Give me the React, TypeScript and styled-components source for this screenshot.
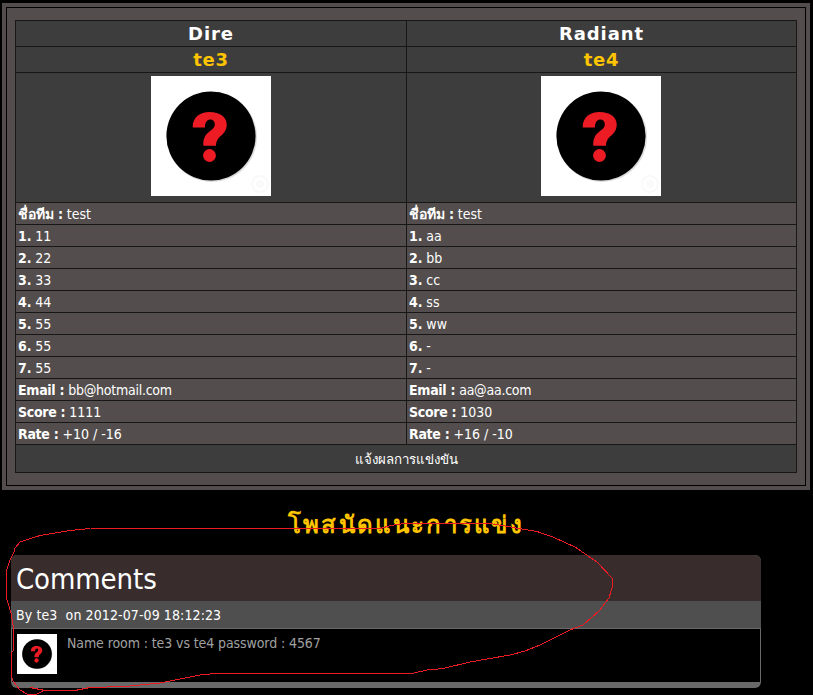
import React from 'react';
import styled, { createGlobalStyle } from 'styled-components';

const Global = createGlobalStyle`
  body { margin: 0; background: #000; color: #fff; font-family: 'DejaVu Sans Condensed', 'Noto Sans', 'DejaVu Sans', sans-serif; }
  #root { width: 813px; height: 695px; overflow: hidden; }
`;

const Page = styled.main`
  position: relative;
  width: 813px;
  height: 695px;
  box-sizing: border-box;
  padding: 3px 3px 0 2px;
  overflow: hidden;
`;

const Panel = styled.section`
  box-sizing: border-box;
  height: 487px;
  padding: 4px;
  background: #534e4d;
`;

const PanelInner = styled.div`
  box-sizing: border-box;
  height: 479px;
  width: 800px;
  padding: 12px 8px;
  border: 1px solid #000;
`;

const Grid = styled.div`
  display: grid;
  grid-template-columns: 390px 389px;
  grid-template-rows: 25px 25px 129px repeat(11, 21px) 27px;
  gap: 1px;
  width: 780px;
  padding: 1px;
  background: #171717;
`;

const HeadCell = styled.div<{ $accent?: boolean }>`
  display: flex;
  align-items: center;
  justify-content: center;
  background: #3d3d3d;
  color: ${(p) => (p.$accent ? '#ffc400' : '#fff')};
  font: bold 18px/24px 'DejaVu Sans', sans-serif;
  letter-spacing: ${(p) => (p.$accent ? '0.7px' : '0.9px')};
`;

const PictureCell = styled(HeadCell)`
  align-items: flex-start;
  justify-content: flex-start;
  padding: 3px 0 0 135px;

  &:nth-child(even) {
    padding-left: 134px;
  }
`;

const InfoCell = styled.div`
  padding-left: 2px;
  background: #534e4d;
  font-size: 14px;
  line-height: 23px;
  white-space: pre;
  overflow: hidden;
`;

const Label = styled.b<{ $wide?: boolean }>`
  letter-spacing: ${(p) => (p.$wide ? '-0.3px' : '-0.1px')};
`;

const Value = styled.span<{ $tight?: boolean }>`
  letter-spacing: ${(p) => (p.$tight ? '-0.25px' : '0')};
`;

const ReportCell = styled.div`
  grid-column: 1 / -1;
  background: #3d3d3d;
  font-size: 13.3px;
  line-height: 29px;
  text-align: center;
  height: 27px;
`;

const Title = styled.h1`
  margin: 0;
  height: 65px;
  color: #ffc400;
  font: bold 24px/70px 'DejaVu Sans', sans-serif;
  letter-spacing: 2.3px;
  text-align: center;
`;

const Comments = styled.section`
  width: 750px;
  height: 133px;
  margin-left: 9px;
  border-radius: 6px;
  overflow: hidden;
  background: #696969;
`;

const CommentsHeading = styled.h2`
  margin: 0;
  height: 46px;
  padding-left: 5px;
  background: #392c2c;
  font-size: 29px;
  font-weight: normal;
  line-height: 49px;
  letter-spacing: -0.1px;
`;

const Byline = styled.div`
  height: 27px;
  padding-left: 5px;
  background: #4f4f4f;
  font-size: 14px;
  line-height: 28px;
  letter-spacing: 0.1px;
  white-space: pre;
`;

const CommentBody = styled.div`
  display: flex;
  gap: 10px;
  height: 48px;
  margin: 1px 1px 0;
  padding: 5px 0 0 5px;
  background: #000;
  color: #a0a0a0;
  font-size: 14px;
  line-height: 18px;
  letter-spacing: -0.1px;
`;

const Ink = styled.svg`
  position: absolute;
  inset: 0;
  pointer-events: none;
`;

function Avatar({ size }: { size: number }) {
  return (
    <svg width={size} height={size} viewBox="0 0 120 120">
      <rect width="120" height="120" fill="#fff" />
      <circle cx="61" cy="61" r="45" fill="#ddd" />
      <circle cx="60" cy="60" r="44.6" fill="#000" />
      <path d="M41.7 51.5C41.5 41 49 36 58.5 36C69 36 75.7 41 75.7 48.5C75.7 60 65 59 65 69.7H52.3C51.8 54 64 56 63.8 48C63.6 41.5 53.5 41.5 54 51.5Z" fill="#ed1c24" />
      <circle cx="58.5" cy="79.5" r="6.4" fill="#ed1c24" />
      <circle cx="109" cy="108" r="8" fill="none" stroke="#f9f9f9" strokeWidth="2" />
      <circle cx="109" cy="108" r="4" fill="#fafafa" />
    </svg>
  );
}

const rows = [
  ['ชื่อทีม :', 'test', 'test'],
  ['1.', '11', 'aa'],
  ['2.', '22', 'bb'],
  ['3.', '33', 'cc'],
  ['4.', '44', 'ss'],
  ['5.', '55', 'ww'],
  ['6.', '55', '-'],
  ['7.', '55', '-'],
  ['Email :', 'bb@hotmail.com', 'aa@aa.com'],
  ['Score :', '1111', '1030'],
  ['Rate :', '+10 / -16', '+16 / -10'],
];

export default function App() {
  return (
    <Page>
      <Global />
      <Panel>
        <PanelInner>
          <Grid>
            <HeadCell>Dire</HeadCell>
            <HeadCell>Radiant</HeadCell>
            <HeadCell $accent>te3</HeadCell>
            <HeadCell $accent>te4</HeadCell>
            <PictureCell><Avatar size={120} /></PictureCell>
            <PictureCell><Avatar size={120} /></PictureCell>
            {rows.map(([label, ...teams]) =>
              teams.map((value, i) => (
                <InfoCell key={label + i}>
                  <Label $wide={/^[A-Z]/.test(label)}>{label}</Label>{' '}
                  <Value $tight={value.includes('@')}>{value}</Value>
                </InfoCell>
              )),
            )}
            <ReportCell>แจ้งผลการแข่งขัน</ReportCell>
          </Grid>
        </PanelInner>
      </Panel>
      <Title>โพสนัดแนะการแข่ง</Title>
      <Comments>
        <CommentsHeading>Comments</CommentsHeading>
        <Byline>{'By te3  on 2012-07-09 18:12:23'}</Byline>
        <CommentBody>
          <Avatar size={40} />
          <span>Name room : te3 vs te4 password : 4567</span>
        </CommentBody>
      </Comments>
      <Ink width="813" height="695" fill="none" stroke="#ed1c24" shapeRendering="crispEdges">
        <path d="M90.5 528.5H380L391 525.5L405 523.5H490L502 525.5L522 529L537 531.5L553 537L575 547L597 562L612.5 578.5V586L609 598L599 611L583 625L570 630L554 638L540 645L525 651L510 655L470 662L443 668.5L427 670L412 673.5H215L200 675L160 683L125 686.5L90 687.5L75 690.5H45L30 687.5M45 690L36 694.5H28L20 690L13 681L11.5 676V653L13.5 650V628L11 613L6.5 598V571L10 560L14 552L15 548L20 542L40 535.5L58 532.5L70 530.5L90.5 528.5" />
      </Ink>
    </Page>
  );
}
